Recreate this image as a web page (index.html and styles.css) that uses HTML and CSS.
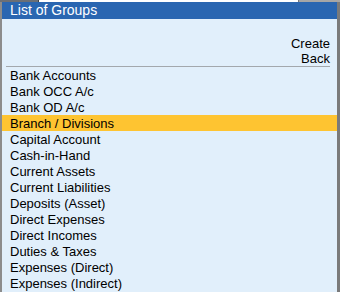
FILE: index.html
```html
<!DOCTYPE html>
<html>
<head>
<meta charset="utf-8">
<link rel="stylesheet" href="styles.css">
</head>
<body>
<div class="topstrip">
  <div class="ts-left"></div>
  <div class="ts-mid"></div>
  <div class="ts-right"></div>
</div>
<div class="dialog">
  <div class="titlebar">List of Groups</div>
  <div class="panel">
    <div class="actions">
      <div class="action">Create</div>
      <div class="action">Back</div>
    </div>
    <div class="sep"></div>
    <ul class="list">
      <li class="item">Bank Accounts</li>
      <li class="item">Bank OCC A/c</li>
      <li class="item">Bank OD A/c</li>
      <li class="item selected">Branch / Divisions</li>
      <li class="item">Capital Account</li>
      <li class="item">Cash-in-Hand</li>
      <li class="item">Current Assets</li>
      <li class="item">Current Liabilities</li>
      <li class="item">Deposits (Asset)</li>
      <li class="item">Direct Expenses</li>
      <li class="item">Direct Incomes</li>
      <li class="item">Duties &amp; Taxes</li>
      <li class="item">Expenses (Direct)</li>
      <li class="item">Expenses (Indirect)</li>
    </ul>
  </div>
</div>
</body>
</html>
```
FILE: styles.css
```css
html, body {
  margin: 0;
  padding: 0;
}
body {
  width: 340px;
  height: 292px;
  overflow: hidden;
  background: #e1effb;
  font-family: "Liberation Sans", Arial, sans-serif;
  color: #000;
}
.topstrip {
  display: flex;
  height: 2px;
}
.ts-left {
  width: 38px;
  background: #6b6f76;
  border-right: 1px solid #444;
}
.ts-mid {
  flex: 1;
  background: #ffffff;
}
.ts-right {
  width: 41px;
  background: #a6a6a6;
  border-left: 1px solid #777;
}
.dialog {
  border-left: 2px solid #8c8c8c;
  border-right: 3px solid #7a7a7a;
  height: 290px;
  box-sizing: border-box;
  display: flex;
  flex-direction: column;
}
.titlebar {
  height: 17px;
  background: #2a66b1;
  color: #ffffff;
  font-size: 14px;
  line-height: 17px;
  padding-left: 8px;
}
.panel {
  flex: 1;
  background: #e1effb;
  padding-top: 17px;
}
.actions {
  display: flex;
  flex-direction: column;
  align-items: flex-end;
  padding-right: 7px;
}
.action {
  font-size: 13px;
  line-height: 15px;
}
.sep {
  height: 1px;
  background: #a3a8ad;
  margin: 0 7px 0 4px;
}
.list {
  list-style: none;
  margin: 0;
  padding: 0;
}
.item {
  height: 16px;
  box-sizing: border-box;
  padding: 2px 0 0 8px;
  font-size: 13px;
  line-height: 14px;
  white-space: nowrap;
}
.item.selected {
  background: #fec431;
}
```
